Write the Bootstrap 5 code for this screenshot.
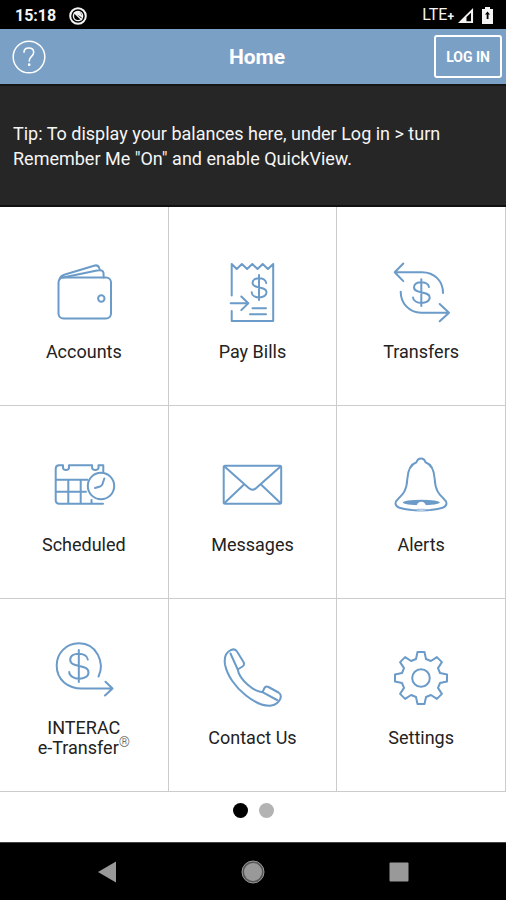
<!DOCTYPE html>
<html lang="en">
<head>
<meta charset="utf-8">
<meta name="viewport" content="width=device-width, initial-scale=1">
<title>Home</title>
<link href="https://cdn.jsdelivr.net/npm/bootstrap@5.3.0/dist/css/bootstrap.min.css" rel="stylesheet">
<style>
body { font-family: Roboto, "Liberation Sans", sans-serif; color: #222; background: #fff; }
.status-bar { height: 29px; background: #000; color: #f4f4f4; padding: 2px 13px 0 15px; font-size: 16px; line-height: 24px; }
.status-bar .clock { font-weight: 700; }
.status-icons { gap: 13px; }
.status-bar .network { font-size: 16px; }
.status-bar .network b { font-size: 12px; }
.app-bar { display: grid; grid-template-columns: 1fr auto 1fr; height: 55px; padding: 0 4px 0 12px; background: #7ba0c6; color: #fff; }
.app-bar h1 { font-size: 21px; line-height: 24px; font-weight: 700; }
.app-bar .btn { --bs-btn-color: #fff; --bs-btn-border-color: #fff; --bs-btn-hover-color: #fff; --bs-btn-hover-border-color: #fff; }
.app-bar .login-btn { border-width: 2px; border-radius: 3px; font-size: 14px; line-height: 18px; font-weight: 700; padding: 10px; height: 43px; }
.tip { background: #262626; border-top: 2px solid #161616; border-bottom: 2px solid #111; color: #f5f5f5; padding: 35px 12px 34px 13px; font-size: 18px; line-height: 25px; }
.tile { border-right: 1px solid #ccc; border-bottom: 1px solid #ccc; padding: 43px 4px 43px; color: #222; font-size: 18px; line-height: 20px; }
.tile-tall { padding-top: 49px; }
.tile-two { padding-top: 32px; padding-bottom: 33px; }
.tile-label { margin-top: 14px; }
.tile-label sup { font-size: 14px; top: -7px; line-height: 0; color: #555; font-weight: 300; }
.tile svg { width: 72px; height: 72px; fill: none; stroke: #6b9bc8; stroke-width: 2; stroke-linecap: round; stroke-linejoin: round; }
.pager { padding: 11px 0 24px; gap: 11px; }
.pager button { width: 15px; height: 15px; background: #b3b3b3; }
.pager button.current { background: #000; }
.system-nav { height: 58px; background: #000; border-top: 1px solid #444; }
.system-nav .btn { width: 146px; border: 0; }
</style>
<script src="https://cdn.jsdelivr.net/npm/bootstrap@5.3.0/dist/js/bootstrap.bundle.min.js"></script>
</head>
<body>
<div class="d-flex flex-column min-vh-100">
  <div class="status-bar d-flex align-items-center justify-content-between">
    <div class="status-icons d-flex align-items-center">
      <span class="clock">15:18</span>
      <svg width="18" height="18" viewBox="0 0 18 18" fill="none" stroke="#f4f4f4" aria-hidden="true">
        <circle cx="9" cy="9" r="7.8" stroke-width="2"/>
        <circle cx="9" cy="9" r="4.6" stroke-width="1.4"/>
        <path d="M5 5.500 13 13M6.500 5.500Q11 3.500 12.500 9.500Z" stroke-width="1.4" fill="#f4f4f4"/>
      </svg>
    </div>
    <div class="d-flex align-items-center">
      <span class="network">LTE<b class="align-text-top">+</b></span>
      <svg width="16" height="16" viewBox="0 0 17 17" class="ms-1 me-2" aria-hidden="true"><path d="M0 16 16 0V16Z" fill="#f4f4f4"/><path d="M9 9.5 13.8 5V14H9Z" fill="#000"/></svg>
      <svg width="11" height="17" viewBox="0 0 11 17" aria-hidden="true"><path d="M3 0h5v2h3v15H0V2h3Z" fill="#f4f4f4"/><path d="M5.500 4.500 3 7.500h1.700V12h1.800V7.500H8Z" fill="#000"/></svg>
    </div>
  </div>

  <header class="app-bar align-items-center">
    <button type="button" class="btn p-0 border-0 d-flex" aria-label="Help">
      <svg width="34" height="34" viewBox="0 0 34 34" fill="none" stroke="#fff" stroke-width="1.5" stroke-linecap="round">
        <circle cx="17" cy="17" r="15.8"/>
        <path d="M12 12.3C12 9.7 14 8 16.7 8c3 0 5 1.7 5 4.3 0 4.2-4.5 4-4.5 8.7"/>
        <circle cx="17.2" cy="24.7" r=".6" fill="#fff"/>
      </svg>
    </button>
    <h1 class="m-0">Home</h1>
    <button type="button" class="btn login-btn ms-auto">LOG IN</button>
  </header>

  <p class="tip m-0">Tip: To display your balances here, under Log in &gt; turn Remember Me "On" and enable QuickView.</p>

  <main>
    <nav class="row row-cols-3 g-0 text-center" aria-label="Main menu">
      <a href="#" class="col tile tile-tall text-decoration-none d-flex flex-column align-items-center justify-content-end">
        <svg viewBox="0 0 72 72" aria-hidden="true">
          <rect x="10.5" y="21.5" width="52.5" height="41" rx="5"/>
          <circle cx="53.3" cy="42.5" r="3.2"/>
          <path d="M11.5 23.5C12 20.5 14 19.5 17 18.5L46 9.700q4-1.200 5.200 2.300l.8 2M15 21.500l34-6.900q6-1.400 6.500 2.400l.2 4.500"/>
        </svg>
        <span class="tile-label">Accounts</span>
      </a>
      <a href="#" class="col tile tile-tall text-decoration-none d-flex flex-column align-items-center justify-content-end">
        <svg viewBox="0 0 72 72" aria-hidden="true">
          <path d="M15.7 39.500V8l5 5 5.200-5 5.200 5 5.200-5 5.200 5 5.200-5 5.200 5 5.300-5V65H15.700V55M14.700 47.300H32M25.300 40.500l7 6.800-7 6.800M36.500 52.300H50M34 58.300H50"/>
          <path d="M43 19V44M50.2 27C49.5 20.5 36.5 20.5 36.5 27 36.5 33.5 50.5 29.5 50.5 36.3 50.5 43.3 36 43 35.7 36.3"/>
        </svg>
        <span class="tile-label">Pay Bills</span>
      </a>
      <a href="#" class="col tile tile-tall text-decoration-none d-flex flex-column align-items-center justify-content-end">
        <svg viewBox="0 0 72 72" aria-hidden="true">
          <path d="M18.3 7.5 9.7 16.3l8.6 8.8M9.7 16.3H37C49.5 16.3 58 25 58 37M15.7 35.7C15.7 47 24 56.7 36 56.7H64M54.7 48 64 56.7l-9.3 8.6"/>
          <path d="M36.3 23.3V50M44 31C43 24.8 29 24.5 29 31.2 29 38.5 44.7 34.5 44.7 41.5 44.7 49 28.3 48.5 28 41.5"/>
        </svg>
        <span class="tile-label">Transfers</span>
      </a>

      <a href="#" class="col tile text-decoration-none d-flex flex-column align-items-center justify-content-end">
        <svg viewBox="0 0 72 72" aria-hidden="true">
          <path d="M55.3 22.5V16.3H50.5V19q-.5 2-3.2 2t-3.2-2v-2.700H21V19q-.5 2-3 2t-3-2v-2.700H11q-3.300 0-3.300 3.500V51q0 3.700 3.500 3.700H55M7.700 30.700H39.500M7.700 42.700H38M20.300 30.700v24M32.700 30.700v24M43.500 51v3.700"/>
          <circle cx="53" cy="37" r="13.2"/>
          <path d="M56.3 29.5 54.5 35q-.6 2-2.5 2.500L47 39"/>
        </svg>
        <span class="tile-label">Scheduled</span>
      </a>
      <a href="#" class="col tile text-decoration-none d-flex flex-column align-items-center justify-content-end">
        <svg viewBox="0 0 72 72" aria-hidden="true">
          <rect x="7.7" y="16.7" width="57.5" height="38" rx="1.5"/>
          <path d="M8.5 17.5 32.7 39Q36.5 42.5 40.3 39L64.5 17.5M8.5 54 27.5 36M64.5 54l-19-18"/>
        </svg>
        <span class="tile-label">Messages</span>
      </a>
      <a href="#" class="col tile text-decoration-none d-flex flex-column align-items-center justify-content-end">
        <svg viewBox="0 0 72 72" aria-hidden="true">
          <path d="M36 9.5C33.5 9.5 32.2 11 31.5 13.2 25 15.5 22.8 22 22.3 30 21.8 41 18 45.5 13.5 49.5 8.5 54 10.5 57.5 14.5 58.8Q24 61.5 36 61.5T57.5 58.8C61.5 57.5 63.5 54 58.5 49.5 54 45.5 50.2 41 49.7 30 49.2 22 47 15.5 40.5 13.2 39.8 11 38.5 9.5 36 9.5Z"/>
          <ellipse cx="36.3" cy="53.5" rx="18.5" ry="2.8" fill="#6b9bc8" stroke="none"/>
          <circle cx="36.3" cy="57.5" r="4.7" fill="#fff" stroke="none"/>
          <path d="M32.5 60.8h7.5" stroke="#a9c5e0"/>
        </svg>
        <span class="tile-label">Alerts</span>
      </a>

      <a href="#" class="col tile tile-two text-decoration-none d-flex flex-column align-items-center justify-content-end">
        <svg viewBox="0 0 72 72" aria-hidden="true">
          <path d="M50.5 44.5C57 31 49 11.3 31 11.3 18 11.3 8.7 21.5 8.7 33.5 8.7 48 20 56.5 34 56.5H64M57.500 49.700l7 6.800-7.500 7"/>
          <path d="M30.8 18V50M39.8 27.5C39 19.8 22.2 19.5 22.2 27.8 22.2 36.5 40.5 31.5 40.5 40.5 40.5 49 21.5 48.7 21.2 40"/>
        </svg>
        <span class="tile-label">INTERAC<br>e-Transfer<sup>®</sup></span>
      </a>
      <a href="#" class="col tile text-decoration-none d-flex flex-column align-items-center justify-content-end">
        <svg viewBox="0 0 72 72" aria-hidden="true">
          <path d="M14.7 8.2C10 10.5 8 16 9 22.5 11 33 19 45 30 53.5 38 59.8 48 64.5 55.5 63.5 59.5 63 62.5 60.5 64.2 57 65.5 54 65 52 62.5 50.5L52.5 45C50.5 44 49 44.7 48.2 46.5L46.5 50.2C37 49.5 23.5 37.5 21.7 27.5L26.5 24.5C28.3 23.3 28.5 22 27.5 20L21 9.5C19.7 7.2 17.5 6.8 14.7 8.2ZM14.5 11.5 21.7 27.5M46.5 50.2 61 58"/>
        </svg>
        <span class="tile-label">Contact Us</span>
      </a>
      <a href="#" class="col tile text-decoration-none d-flex flex-column align-items-center justify-content-end">
        <svg viewBox="-36 -36 72 72" aria-hidden="true">
          <path d="M-5-19-3.500-26H3.500L5-19 9.900-17 15.900-20.900 20.900-15.900 17-9.900 19-5 26-3.500V3.500L19 5 17 9.900 20.900 15.900 15.900 20.900 9.900 17 5 19 3.500 26H-3.500L-5 19-9.900 17-15.900 20.900-20.900 15.900-17 9.900-19 5-26 3.500V-3.500L-19-5-17-9.900-20.900-15.900-15.900-20.900-9.900-17Z"/>
          <circle r="8.8"/>
        </svg>
        <span class="tile-label">Settings</span>
      </a>
    </nav>
    <div class="pager d-flex justify-content-center">
      <button type="button" class="current border-0 rounded-circle p-0" aria-label="Page 1"></button>
      <button type="button" class="border-0 rounded-circle p-0" aria-label="Page 2"></button>
    </div>
  </main>

  <nav class="system-nav mt-auto d-flex justify-content-center align-items-center" aria-label="System">
    <button type="button" class="btn p-0" aria-label="Back"><svg width="24" height="24" viewBox="0 0 24 24"><path d="M3 12 21 1.500V22.500Z" fill="#999"/></svg></button>
    <button type="button" class="btn p-0" aria-label="Home screen"><svg width="24" height="24" viewBox="0 0 24 24"><circle cx="12" cy="12" r="11" fill="#555" stroke="#999"/><circle cx="12" cy="12" r="9" fill="#999"/></svg></button>
    <button type="button" class="btn p-0" aria-label="Recent apps"><svg width="24" height="24" viewBox="0 0 24 24"><rect x="2.500" y="2.500" width="19" height="19" rx="1" fill="#999"/></svg></button>
  </nav>
</div>
</body>
</html>
